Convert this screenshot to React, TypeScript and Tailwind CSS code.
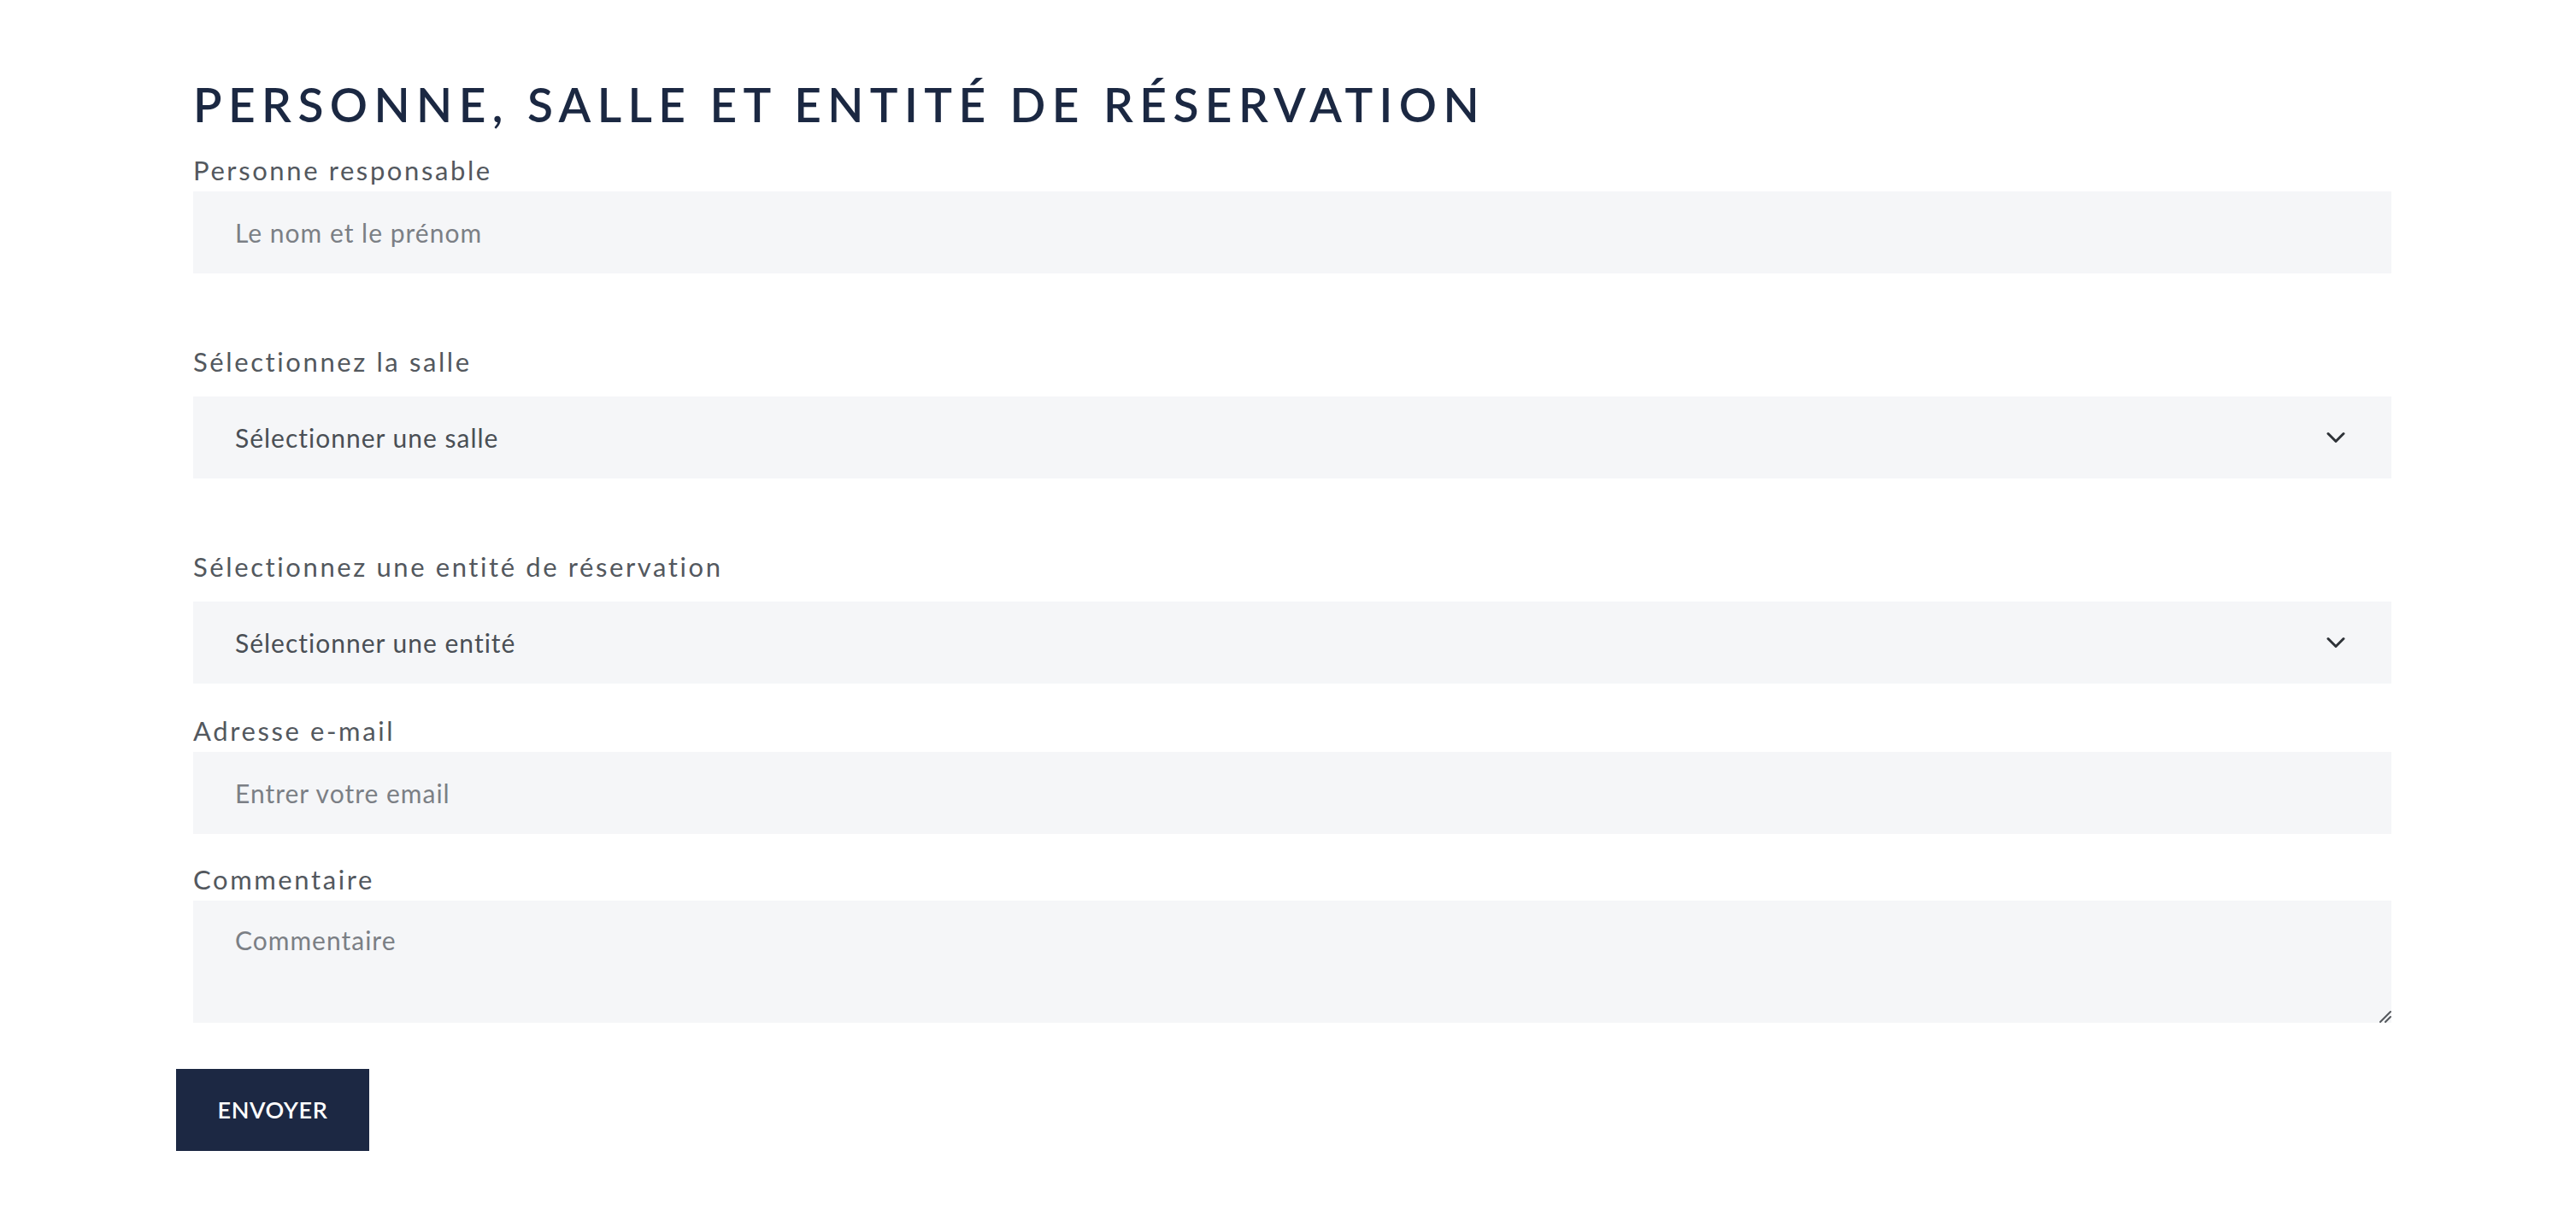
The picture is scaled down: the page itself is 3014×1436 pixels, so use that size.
import React from "react";

const font = { fontFamily: "Lato, 'Open Sans', sans-serif" };

function Chevron() {
  return (
    <svg
      className="pointer-events-none absolute right-[54px] top-1/2 -translate-y-1/2"
      width="22"
      height="13"
      viewBox="0 0 22 13"
      fill="none"
    >
      <path d="M2 2l9 9 9-9" stroke="#2f3338" strokeWidth="3" strokeLinecap="round" strokeLinejoin="round" />
    </svg>
  );
}

function Label({ children }: { children: React.ReactNode }) {
  return (
    <label className="block text-[31px] leading-[50px] tracking-[2.6px] text-[#53585e]">
      {children}
    </label>
  );
}

function Select({ placeholder }: { placeholder: string }) {
  return (
    <div className="relative mt-[16px]">
      <select
        defaultValue=""
        className="block h-[96px] w-full appearance-none bg-[#f5f6f8] pl-[49px] pr-[100px] text-[30px] tracking-[1px] text-[#4a4f55] outline-none"
        style={font}
      >
        <option value="">{placeholder}</option>
      </select>
      <Chevron />
    </div>
  );
}

export default function App() {
  return (
    <div className="min-h-screen bg-white pl-[206px] pt-[89px]" style={font}>
      <form className="w-[2592px]" onSubmit={(e) => e.preventDefault()}>
        <div className="pl-[20px]">
          <h2 className="text-[55px] font-semibold leading-[66px] tracking-[7.4px] text-[#1b2842]">
            PERSONNE, SALLE ET ENTITÉ DE RÉSERVATION
          </h2>

          <div className="mt-[19px]">
            <Label>Personne responsable</Label>
            <input
              type="text"
              placeholder="Le nom et le prénom"
              className="block h-[96px] w-full bg-[#f5f6f8] pl-[49px] text-[30px] tracking-[1px] text-[#4a4f55] outline-none placeholder:text-[#7b7f85]"
            />
          </div>

          <div className="mt-[78px]">
            <Label>Sélectionnez la salle</Label>
            <Select placeholder="Sélectionner une salle" />
          </div>

          <div className="mt-[78px]">
            <Label>Sélectionnez une entité de réservation</Label>
            <Select placeholder="Sélectionner une entité" />
          </div>

          <div className="mt-[30px]">
            <Label>Adresse e-mail</Label>
            <input
              type="email"
              placeholder="Entrer votre email"
              className="block h-[96px] w-full bg-[#f5f6f8] pl-[49px] text-[30px] tracking-[1px] text-[#4a4f55] outline-none placeholder:text-[#7b7f85]"
            />
          </div>

          <div className="mt-[28px]">
            <Label>Commentaire</Label>
            <div className="relative">
              <textarea
                placeholder="Commentaire"
                className="block h-[143px] w-full resize-none bg-[#f5f6f8] px-[49px] pt-[26px] text-[30px] leading-[40px] tracking-[1px] text-[#4a4f55] outline-none placeholder:text-[#7b7f85]"
              />
              {/* resize grip */}
              <svg
                className="pointer-events-none absolute bottom-0 right-0"
                width="16"
                height="16"
                viewBox="0 0 16 16"
              >
                <path d="M3 15L15 3M9 15L15 9" stroke="#55595e" strokeWidth="2" strokeLinecap="round" />
              </svg>
            </div>
          </div>
        </div>

        <button
          type="submit"
          className="mt-[54px] flex h-[96px] w-[226px] items-center justify-center bg-[#1c2843] text-[27px] font-semibold tracking-[0.6px] text-white"
        >
          ENVOYER
        </button>
      </form>
    </div>
  );
}
